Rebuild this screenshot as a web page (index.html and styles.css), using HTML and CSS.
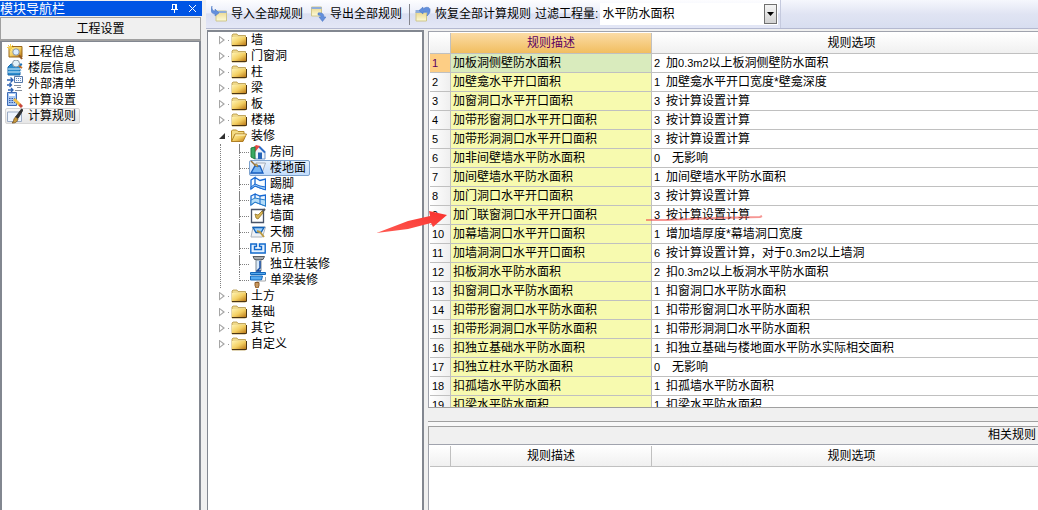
FILE: index.html
```html
<!DOCTYPE html>
<html lang="zh-CN">
<head>
<meta charset="utf-8">
<title>工程设置 - 计算规则</title>
<link rel="stylesheet" href="styles.css">
</head>
<body>
<svg class="defs" aria-hidden="true">
  <defs>
    <linearGradient id="gold" x1="0" y1="0" x2="1" y2="1"><stop offset="0" stop-color="#fff3b0"/><stop offset=".5" stop-color="#f3cf62"/><stop offset="1" stop-color="#b87412"/></linearGradient>
    <linearGradient id="note" x1="0" y1="0" x2="0" y2="1"><stop offset="0" stop-color="#e9d58a"/><stop offset="1" stop-color="#fdfbd8"/></linearGradient>
    <linearGradient id="red" x1="0" y1="1" x2="1" y2="0"><stop offset="0" stop-color="#ff5a52"/><stop offset="1" stop-color="#f8302c"/></linearGradient>
    <symbol id="folder" viewBox="0 0 16 16">
      <path d="M1 4V3l1-1h4l1 1.500h7.500V14H1z" fill="#efd98c" stroke="#b29545" stroke-width=".8"/>
      <path d="M1 5h14v8.500H1z" fill="url(#gold)"/><path d="M1 13.500h14.500V5" fill="none" stroke="#4b3513"/>
    </symbol>
    <symbol id="folder-open" viewBox="0 0 16 16">
      <path d="M.5 13.500V3l1-1h4l1.500 1.500h6V6" fill="#f4dc83" stroke="#b88d2b"/>
      <path d="M.5 13.500L4 6h11.500L12 13.500z" fill="url(#gold)" stroke="#a87516" stroke-width=".9"/>
      <path d="M4.500 7h10" stroke="#fff6c8"/>
    </symbol>
  </defs>
</svg>

<div class="app">
  <aside class="nav">
    <header class="nav-title">
      <span class="nav-name">模块导航栏</span>
      <button class="tool" aria-label="固定"><svg viewBox="0 0 9 9"><path d="M2.500 0v5M5.500 0v5M6.500 0v5M2 .5h5M1 5.500h7M4.500 6v3" stroke="#fff" fill="none"/></svg></button>
      <button class="tool" aria-label="关闭"><svg viewBox="0 0 9 9"><path d="M1 1l7 7M8 1L1 8" stroke="#fff" fill="none"/></svg></button>
    </header>
    <button class="nav-section">工程设置</button>
    <ul class="nav-list">
      <li><button class="nav-item"><svg viewBox="0 0 16 16"><path d="M2 2.500h13v10.500H2z" fill="url(#gold)" stroke="#99661a"/><path d="M3.500 0v7M0 3.500h7M1 1l5 5M6 1L1 6" stroke="#f7d04a"/><circle cx="9" cy="8" r="3.200" fill="#dceeff" stroke="#8796aa"/><path d="M12 11l3 4" stroke="#935a25" stroke-width="2"/></svg>工程信息</button></li>
      <li><button class="nav-item"><svg viewBox="0 0 16 16"><path d="M1 7l3-3h11l-2 3v8H1z" fill="#2c8dce" stroke="#1769ae"/><path d="M1 9h12l2-2M1 12h12l2-2" stroke="#d7f1ff" fill="none"/><circle cx="9" cy="3.500" r="3.500" fill="#e2f2fa" stroke="#8495a3"/><path d="M12 6l3 2" stroke="#c26c24" stroke-width="2"/></svg>楼层信息</button></li>
      <li><button class="nav-item"><svg viewBox="0 0 16 16"><path d="M0 4h6M3.500 1.500L6 4 3.500 6.500M0 9h4M2.500 7l2 2-2 2M1 14h5M4 12l2 2-2 2" stroke="#2c62b2" fill="none" stroke-width="1.300"/><path d="M7.500 .5h8v6h-8z" fill="#f4f8ff" stroke="#5578a8"/><path d="M9 2.500h6M9 4.500h6" stroke="#668cc0" stroke-dasharray="1 1"/><path d="M7 9.500h7M10 11.500h4M8 14.500h7" stroke="#87909c"/></svg>外部清单</button></li>
      <li><button class="nav-item"><svg viewBox="0 0 16 16"><path d="M.5 .5h9v13h-9z" fill="#a7c8f5" stroke="#3d6bb5"/><path d="M2 2h6v2H2z" fill="#fff"/><path d="M2 6.500h6M2 8.500h6M2 10.500h6" stroke="#375da5" stroke-dasharray="1.500 1"/><path d="M7 7l6 6" stroke="#efbd46" stroke-width="3"/><path d="M12.500 12.500L15 15" stroke="#c7483b" stroke-width="3"/></svg>计算设置</button></li>
      <li><button class="nav-item is-selected"><svg viewBox="0 0 16 16"><path d="M.5 4h14v9.500H.5z" fill="#f0f6ff" stroke="#9aabc5"/><path d="M8.500 9l6-8 1.500 1-5 8.500z" fill="#333" stroke="#222" stroke-width=".8"/><path d="M8.500 9l2.500 2c-1 4-3.500 4-6 4 2-1 1-4 3.500-6z" fill="#c4983e" stroke="#684414" stroke-width=".7"/></svg>计算规则</button></li>
    </ul>
  </aside>

  <main class="work">
    <div class="toolbar">
      <button class="tb-button"><svg viewBox="0 0 16 16"><path d="M5 5h10.500v10H5z" fill="url(#note)" stroke="#cfc68b"/><path d="M5 5h10.500v2H5z" fill="#8fadd9"/><path d="M1 0c-.5 3 1 5 3 5V3l4 4-4 3V8C0 8-1 4 1 0z" fill="#638fdc" stroke="#4b76c0" stroke-width=".5"/></svg>导入全部规则</button>
      <button class="tb-button"><svg viewBox="0 0 16 16"><path d="M1.500 1h10v9h-10z" fill="url(#note)" stroke="#cfc68b"/><path d="M1.500 1h10v2h-10z" fill="#8fadd9"/><path d="M8 7c4-1 6 1 6 4h2l-3.500 4.500L9 11h2c0-1-1-2-3-2z" fill="#638fdc" stroke="#4b76c0" stroke-width=".5"/></svg>导出全部规则</button>
      <span class="tb-sep"></span>
      <button class="tb-button"><svg viewBox="0 0 16 16"><path d="M1 6h10.500v9H1z" fill="url(#note)" stroke="#cfc68b"/><path d="M.5 4h11v3H.5z" fill="#8fadd9"/><path d="M4 4.500L8 1v2c3-3 8-2 7 2 0 2-1 3-3 5 1-3 1-5-4-4v2z" fill="#638fdc" stroke="#4b76c0" stroke-width=".5"/></svg>恢复全部计算规则</button>
      <label class="tb-label" for="quantity">过滤工程量:</label>
      <span class="combo">
        <select id="quantity"><option>水平防水面积</option></select>
        <span class="combo-arrow"><svg viewBox="0 0 7 4"><path d="M0 0h7L3.500 4z"/></svg></span>
      </span>
      <span class="tb-rest"></span>
    </div>

    <div class="panes">
      <nav class="tree">
        <ul class="tree-root">
          <li><div class="node"><button class="toggle" aria-label="展开"></button><svg><use href="#folder"/></svg>墙</div></li>
          <li><div class="node"><button class="toggle" aria-label="展开"></button><svg><use href="#folder"/></svg>门窗洞</div></li>
          <li><div class="node"><button class="toggle" aria-label="展开"></button><svg><use href="#folder"/></svg>柱</div></li>
          <li><div class="node"><button class="toggle" aria-label="展开"></button><svg><use href="#folder"/></svg>梁</div></li>
          <li><div class="node"><button class="toggle" aria-label="展开"></button><svg><use href="#folder"/></svg>板</div></li>
          <li><div class="node"><button class="toggle" aria-label="展开"></button><svg><use href="#folder"/></svg>楼梯</div></li>
          <li><div class="node"><button class="toggle is-open" aria-label="折叠"></button><svg><use href="#folder-open"/></svg>装修</div>
            <ul class="branch">
              <li><button class="leaf"><svg viewBox="0 0 16 16"><path d="M4 7l5-5 6 6v7H5z" fill="#eef4fc" stroke="#6f97cd"/><path d="M9 2.500l6 6" fill="none" stroke="#2d6cc6" stroke-width="2"/><path d="M3 4l3-3 4 1-5 6z" fill="#e74a41"/><path d="M1 4l4-1v12l-4-2z" fill="#39a962" stroke="#227c42"/><path d="M8 8.500h4V15H8z" fill="#2865b6"/></svg>房间</button></li>
              <li><button class="leaf is-selected"><svg viewBox="0 0 16 16"><path d="M6 3h9.500L12 13H1z" fill="#eef3fa" stroke="#a4adb9"/><path d="M1 13l4-7h5l3 7z" fill="#78b6f4" stroke="#175fc1" stroke-width="1.300"/><path d="M1 1l4 4" stroke="#987039" stroke-width="1.500"/><path d="M4 5l3-1 1 3z" fill="#dfc171" stroke="#8b6a2c" stroke-width=".6"/></svg>楼地面</button></li>
              <li><button class="leaf"><svg viewBox="0 0 16 16"><path d="M1 4l4-2.500V10l-4 3zM5 1.500l5 3L15.500 3v10.500L10 12l-5-2" fill="#fafdff" stroke="#1769d2" stroke-width="1.300"/><path d="M1 11l4-3 5 2 5.500 1v3L10 12l-5-2-4 3z" fill="#9bc9f6" stroke="#1769d2"/></svg>踢脚</button></li>
              <li><button class="leaf"><svg viewBox="0 0 16 16"><path d="M1 4l4-2v8l-4 3zM5 2l5 2 5.500-1v11L10 12l-5-2" fill="#edf6ff" stroke="#1769d2" stroke-width="1.300"/><path d="M1 8l4-2 5 1 5.500 1v6L10 12l-5-2-4 3z" fill="#b4dcf8" stroke="#287fc9"/><path d="M10 4v8" stroke="#1769d2"/></svg>墙裙</button></li>
              <li><button class="leaf"><svg viewBox="0 0 16 16"><path d="M1.500 1.500h12v13h-12z" fill="#fff" stroke="#485368" stroke-width="1.300"/><path d="M12 4l3-3" stroke="#555" stroke-width="2"/><path d="M5 6l3 1 4-4 1 2-5 6-2-1z" fill="#d9b655" stroke="#937326" stroke-width=".8"/></svg>墙面</button></li>
              <li><button class="leaf"><svg viewBox="0 0 16 16"><path d="M3 3h12.500l-3 10H1z" fill="#eef1f5" stroke="#abb2bc"/><path d="M3 3.500h11l-3 5H6z" fill="#9ed0fb" stroke="#1262b8" stroke-width="1.300"/><path d="M7 7l3 1 4 5" fill="none" stroke="#bd9b42" stroke-width="2"/></svg>天棚</button></li>
              <li><button class="leaf"><svg viewBox="0 0 16 16"><path d="M.8 4h5.700v2.500H4.500v3h7v-3h-2V4h5.700v9H.8z" fill="#e2f0ff" stroke="#1269cc" stroke-width="1.400"/></svg>吊顶</button></li>
              <li><button class="leaf"><svg viewBox="0 0 16 16"><path d="M3 .5h11.500l-1.500 3H4.500z" fill="#a6a9ac" stroke="#575b60"/><path d="M6 4h5v11H6z" fill="#d7e9fa" stroke="#7d8790"/><path d="M10 5v7l-3 3h4" fill="none" stroke="#174ca0" stroke-width="1.500"/></svg>独立柱装修</button></li>
              <li><button class="leaf"><svg viewBox="0 0 16 16"><path d="M.5 .5h15v2H.5zM.5 4h12l-1 4H.5z" fill="#56aaf0" stroke="#1368bc"/><path d="M15.500 5v4H7v2" fill="none" stroke="#a5a9ad"/><path d="M5 10.500h4v3L8 16H6l-1-2.500z" fill="#c8985f" stroke="#8b5b28"/></svg>单梁装修</button></li>
            </ul>
          </li>
          <li><div class="node"><button class="toggle" aria-label="展开"></button><svg><use href="#folder"/></svg>土方</div></li>
          <li><div class="node"><button class="toggle" aria-label="展开"></button><svg><use href="#folder"/></svg>基础</div></li>
          <li><div class="node"><button class="toggle" aria-label="展开"></button><svg><use href="#folder"/></svg>其它</div></li>
          <li><div class="node"><button class="toggle" aria-label="展开"></button><svg><use href="#folder"/></svg>自定义</div></li>
        </ul>
      </nav>

      <section class="rules">
        <div class="grid-frame">
          <table class="grid">
            <colgroup><col class="c-index"><col class="c-rule"><col class="c-option"></colgroup>
            <thead><tr><th></th><th class="is-active">规则描述</th><th>规则选项</th></tr></thead>
            <tbody>
              <tr class="is-current"><th>1</th><td>加板洞侧壁防水面积</td><td><span class="code">2</span>加<span class="num">0.3m2</span>以上板洞侧壁防水面积</td></tr>
              <tr><th>2</th><td>加壁龛水平开口面积</td><td><span class="code">1</span>加壁龛水平开口宽度*壁龛深度</td></tr>
              <tr><th>3</th><td>加窗洞口水平开口面积</td><td><span class="code">3</span>按计算设置计算</td></tr>
              <tr><th>4</th><td>加带形窗洞口水平开口面积</td><td><span class="code">3</span>按计算设置计算</td></tr>
              <tr><th>5</th><td>加带形洞洞口水平开口面积</td><td><span class="code">3</span>按计算设置计算</td></tr>
              <tr><th>6</th><td>加非间壁墙水平防水面积</td><td><span class="code wide">0</span>无影响</td></tr>
              <tr><th>7</th><td>加间壁墙水平防水面积</td><td><span class="code">1</span>加间壁墙水平防水面积</td></tr>
              <tr><th>8</th><td>加门洞口水平开口面积</td><td><span class="code">3</span>按计算设置计算</td></tr>
              <tr><th>9</th><td>加门联窗洞口水平开口面积</td><td><span class="code">3</span>按计算设置计算</td></tr>
              <tr><th>10</th><td>加幕墙洞口水平开口面积</td><td><span class="code">1</span>增加墙厚度*幕墙洞口宽度</td></tr>
              <tr><th>11</th><td>加墙洞洞口水平开口面积</td><td><span class="code">6</span>按计算设置计算，对于<span class="num">0.3m2</span>以上墙洞</td></tr>
              <tr><th>12</th><td>扣板洞水平防水面积</td><td><span class="code">2</span>扣<span class="num">0.3m2</span>以上板洞水平防水面积</td></tr>
              <tr><th>13</th><td>扣窗洞口水平防水面积</td><td><span class="code">1</span>扣窗洞口水平防水面积</td></tr>
              <tr><th>14</th><td>扣带形窗洞口水平防水面积</td><td><span class="code">1</span>扣带形窗洞口水平防水面积</td></tr>
              <tr><th>15</th><td>扣带形洞洞口水平防水面积</td><td><span class="code">1</span>扣带形洞洞口水平防水面积</td></tr>
              <tr><th>16</th><td>扣独立基础水平防水面积</td><td><span class="code">1</span>扣独立基础与楼地面水平防水实际相交面积</td></tr>
              <tr><th>17</th><td>扣独立柱水平防水面积</td><td><span class="code wide">0</span>无影响</td></tr>
              <tr><th>18</th><td>扣孤墙水平防水面积</td><td><span class="code">1</span>扣孤墙水平防水面积</td></tr>
              <tr><th>19</th><td>扣梁水平防水面积</td><td><span class="code">1</span>扣梁水平防水面积</td></tr>
            </tbody>
          </table>
        </div>
        <div class="splitter"></div>
        <h2 class="related-title">相关规则</h2>
        <div class="related">
          <table class="grid">
            <colgroup><col class="c-index"><col class="c-rule"><col class="c-option"></colgroup>
            <thead><tr><th></th><th>规则描述</th><th>规则选项</th></tr></thead>
          </table>
        </div>
      </section>
    </div>
  </main>
</div>

<svg class="marks" viewBox="0 0 390 30" aria-hidden="true">
  <path d="M.5 26L32 14l22-5-1-5 18 4-14 12-2-4-23 6z" fill="url(#red)"/>
  <path d="M270 13h21l50-2 43-1 2-1" fill="none" stroke="#f0524c" stroke-width="2" stroke-opacity=".6"/>
</svg>
</body>
</html>
```

FILE: styles.css
```css
* { box-sizing: border-box; }

body {
  margin: 0;
  background: #f0f0f0;
  color: #000;
  font: 12px/16px "Liberation Sans", "Noto Sans CJK SC", sans-serif;
}

button, select {
  font: inherit;
  color: inherit;
  border: 0;
  padding: 0;
  margin: 0;
  background: none;
}

ul { list-style: none; margin: 0; padding: 0; }
svg { display: block; flex: none; width: 16px; height: 16px; }
.defs { position: absolute; width: 0; height: 0; }

.app { display: flex; height: 100vh; gap: 4px; overflow: hidden; }

/* Module navigation */
.nav { display: flex; flex-direction: column; flex: none; width: 202px; padding-top: 1px; }
.nav-title {
  display: flex;
  align-items: center;
  gap: 9px;
  height: 15px;
  padding-right: 5px;
  background: #0055e5;
  color: #fff;
  line-height: 15px;
}
.nav-name { flex: 1; font-size: 13px; }
.tool svg { width: 9px; height: 9px; }
.nav-section {
  height: 24px;
  margin: 1px 1px 0 0;
  border: 1px solid #a0a0a0;
  border-bottom-width: 2px;
  background: #f0f0f0;
}
.nav-list {
  flex: 1;
  margin-right: 1px;
  padding: 2px 3px;
  border: solid #828790;
  border-width: 1px 2px 0;
  background: #fff;
}
.nav-list li { height: 16px; }
.nav-item {
  display: flex;
  align-items: center;
  gap: 5px;
  height: 16px;
  padding: 0 3px 0 1px;
  border: 1px solid transparent;
  border-radius: 2px;
}
.nav-item.is-selected { background: linear-gradient(#f8f8f8, #e6e6e6); border-color: #d6d6d6; }

/* Toolbar */
.work { display: flex; flex-direction: column; flex: 1; min-width: 0; }
.toolbar {
  display: flex;
  align-items: center;
  flex: none;
  height: 29px;
  padding-left: 5px;
  border-bottom: 1px solid #b4b9d0;
  background: linear-gradient(#fdfdff, #eceffa 45%, #dadff1 50%, #e4e7f6);
  white-space: nowrap;
}
.tb-button { display: flex; align-items: center; gap: 4px; margin-right: 7px; }
.tb-sep { width: 1px; height: 21px; margin-right: 5px; background: #85868e; }
.tb-button:nth-of-type(3) { margin-right: 4px; }
.tb-label { margin-right: 2px; }
.combo { position: relative; width: 178px; height: 22px; }
.combo select { display: block; width: 100%; height: 22px; padding: 0 18px 0 2px; background: #fff; appearance: none; border-radius: 0; }
.combo-arrow {
  position: absolute;
  top: 1px;
  right: 1px;
  display: grid;
  place-items: center;
  width: 13px;
  height: 20px;
  border: 1px solid #707070;
  background: linear-gradient(#f4f4f4, #d2d2d2);
  pointer-events: none;
}
.combo-arrow svg { width: 7px; height: 4px; }
.tb-rest { flex: 1; align-self: stretch; margin-left: 2px; border-left: 1px solid #c5cade; background: linear-gradient(#f5f7fd, #e0e4f3 50%, #d8def0); }

/* Element tree */
.panes { display: flex; flex: 1; min-height: 0; gap: 4px; padding: 1px 0 0 1px; }
.tree { flex: none; width: 217px; padding: 0 10px; border: solid #828790; border-width: 2px 2px 0 1px; background: #fff; }
.node { display: flex; align-items: center; height: 16px; padding-left: 1px; }
.node svg { margin-right: 4px; }
.toggle { display: grid; align-items: center; width: 12px; height: 16px; background: linear-gradient(90deg, #999 1px, transparent 1px) 9px 8px / 2px 1px no-repeat; }
.toggle::before { content: ""; width: 6px; height: 9px; background: #a6a6a6; clip-path: polygon(0 0, 100% 50%, 0 100%, 0 0, 1px 2px, 1px 7px, 4px 50%, 1px 2px); }
.toggle.is-open::before { height: 6px; background: #303030; clip-path: polygon(100% 0, 100% 100%, 0 100%); }
.branch { margin-left: 2px; padding-left: 18px; border-left: 1px dotted #808080; }
.branch li { display: flex; height: 16px; border-left: 1px dotted #808080; }
.branch li:last-child { border-color: transparent; }
.branch li::before { content: ""; flex: none; width: 9px; height: 8px; margin-left: -1px; border: dotted #808080; border-width: 0 0 1px 1px; }
.leaf { display: flex; align-items: center; gap: 4px; height: 16px; padding: 0 3px 0 0; border: 1px solid transparent; border-radius: 2px; white-space: nowrap; }
.leaf.is-selected { background: linear-gradient(#e4f0fd, #c2dcfc); border-color: #7da2ce; }

/* Rule grids */
.rules { display: flex; flex-direction: column; flex: 1; min-width: 0; padding-top: 1px; }
.grid-frame, .related { overflow: hidden; padding: 1px 0 1px 1px; border: solid #a0a3ad; border-width: 1px 0 0 1px; background: #fff; }
.grid-frame { flex: 1; min-height: 0; border-bottom: 1px solid #a0a0a0; }
.grid { width: 622px; min-width: 100%; table-layout: fixed; border-collapse: separate; border-spacing: 0; }
.c-index { width: 21px; }
.c-rule { width: 201px; }
.grid th, .grid td { height: 19px; padding: 0; border: solid #c0c0c0; border-width: 0 1px 1px 0; font-weight: normal; line-height: 16px; text-align: left; white-space: nowrap; }
.grid thead th { height: 21px; text-align: center; background: linear-gradient(#fff, #f0f0f0); }
.grid thead .is-active { background: linear-gradient(#fbdca6, #f1be60); color: #5c0060; }
.grid tbody th { padding-left: 2px; background: linear-gradient(90deg, #fff, #efefef); font-size: 11px; }
.grid td { padding-left: 2px; }
.grid td:nth-child(2) { background: #f7faaf; }
.grid .is-current td:nth-child(2) { background: #d9ebbd; }
.grid .is-current th { background: #fdce85; color: #5c0060; }
.num, .code { font-size: 11px; }
.code { display: inline-block; width: 12px; }
.code.wide { width: 18px; }

.splitter { flex: none; height: 18px; border-bottom: 4px solid #f8f8f8; box-shadow: inset 0 -1px #a0a0a0; }
.related-title { flex: none; height: 18px; margin: 0; padding-right: 2px; border: solid #a0a0a0; border-width: 1px 0 0 1px; font: inherit; text-align: right; }
.related { flex: none; height: 66px; }

/* Hand-drawn annotation over the grid */
.marks { position: absolute; left: 376px; top: 207px; width: 390px; height: 30px; pointer-events: none; }
```
